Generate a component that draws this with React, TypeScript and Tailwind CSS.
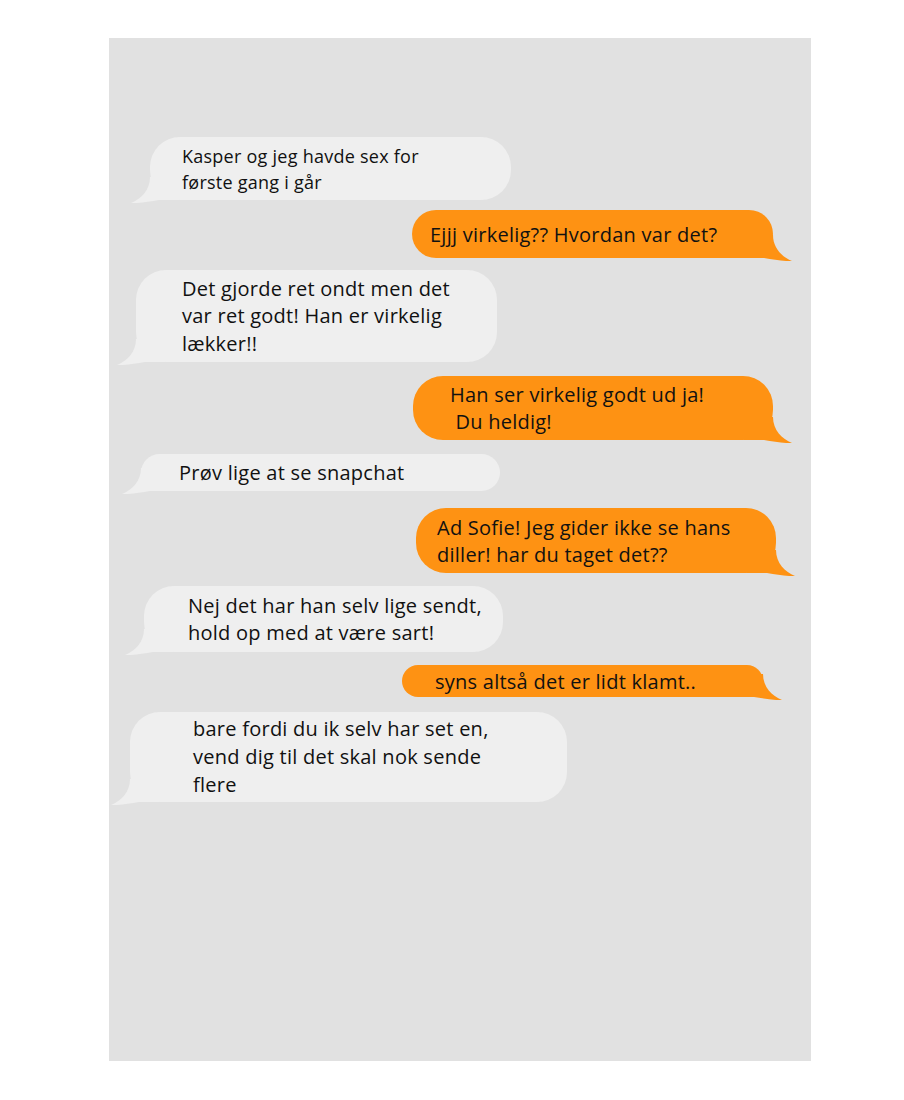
import React from "react";

type B = {
  side: "l" | "r";
  ml: number;
  w: number;
  mt: number;
  h: number;
  pl: number;
  fs: string;
  lh: string;
  lines: string[];
};

const bubbles: B[] = [
  { side: "l", ml: 41, w: 361, mt: 99, h: 63, pl: 32, fs: "text-[18px]", lh: "leading-[26px]", lines: ["Kasper og jeg havde sex for", "første gang i går"] },
  { side: "r", ml: 303, w: 361, mt: 10, h: 48, pl: 18, fs: "text-[20px]", lh: "leading-[27px]", lines: ["Ejjj virkelig?? Hvordan var det?"] },
  { side: "l", ml: 27, w: 361, mt: 12, h: 92, pl: 46, fs: "text-[20px]", lh: "leading-[27.5px]", lines: ["Det gjorde ret ondt men det", "var ret godt! Han er virkelig", "lækker!!"] },
  { side: "r", ml: 304, w: 360, mt: 14, h: 64, pl: 37, fs: "text-[20px]", lh: "leading-[27px]", lines: ["Han ser virkelig godt ud ja!", " Du heldig!"] },
  { side: "l", ml: 32, w: 359, mt: 14, h: 37, pl: 38, fs: "text-[20px]", lh: "leading-[27px]", lines: ["Prøv lige at se snapchat"] },
  { side: "r", ml: 307, w: 360, mt: 17, h: 65, pl: 21, fs: "text-[20px]", lh: "leading-[27px]", lines: ["Ad Sofie! Jeg gider ikke se hans", "diller! har du taget det??"] },
  { side: "l", ml: 35, w: 359, mt: 13, h: 66, pl: 44, fs: "text-[20px]", lh: "leading-[27px]", lines: ["Nej det har han selv lige sendt,", "hold op med at være sart!"] },
  { side: "r", ml: 293, w: 361, mt: 13, h: 32, pl: 33, fs: "text-[20px]", lh: "leading-[27px]", lines: ["syns altså det er lidt klamt.."] },
  { side: "l", ml: 21, w: 437, mt: 15, h: 90, pl: 63, fs: "text-[20px]", lh: "leading-[28px]", lines: ["bare fordi du ik selv har set en,", "vend dig til det skal nok sende", "flere"] },
];

function Tail({ side, color }: { side: "l" | "r"; color: string }) {
  if (side === "l") {
    return (
      <svg
        className="absolute bottom-[-3px] left-[-19px]"
        width="48"
        height="26"
        viewBox="0 0 48 26"
      >
        <path
          d="M19 0 C19 13 10 22 0 26 C9 26.5 18 24.5 28 23 L48 23 L48 0 Z"
          fill={color}
        />
      </svg>
    );
  }
  return (
    <svg
      className="absolute bottom-[-3px] right-[-19px]"
      width="48"
      height="26"
      viewBox="0 0 48 26"
    >
      <path
        d="M29 0 C29 13 38 22 48 26 C39 26.5 30 24.5 20 23 L0 23 L0 0 Z"
        fill={color}
      />
    </svg>
  );
}

export default function App() {
  return (
    <div
      className="w-[904px] h-[1100px] bg-white pt-[38px] pl-[109px]"
      style={{ fontFamily: "'Open Sans', Lato, sans-serif" }}
    >
      <div className="w-[702px] h-[1023px] bg-[#e1e1e1] flex flex-col">
        {bubbles.map((b, i) => {
          const color = b.side === "l" ? "#efefef" : "#fe9213";
          return (
            <div
              key={i}
              className={`relative flex flex-col justify-center rounded-[30px] text-[#111] tracking-[0.25px] ${b.side === "l" ? "bg-[#efefef]" : "bg-[#fe9213]"} ${b.fs} ${b.lh}`}
              style={{ marginLeft: b.ml, width: b.w, marginTop: b.mt, height: b.h, paddingLeft: b.pl }}
            >
              <Tail side={b.side} color={color} />
              {b.lines.map((l, j) => (
                <div key={j} className="relative whitespace-pre">
                  {l}
                </div>
              ))}
            </div>
          );
        })}
      </div>
    </div>
  );
}
